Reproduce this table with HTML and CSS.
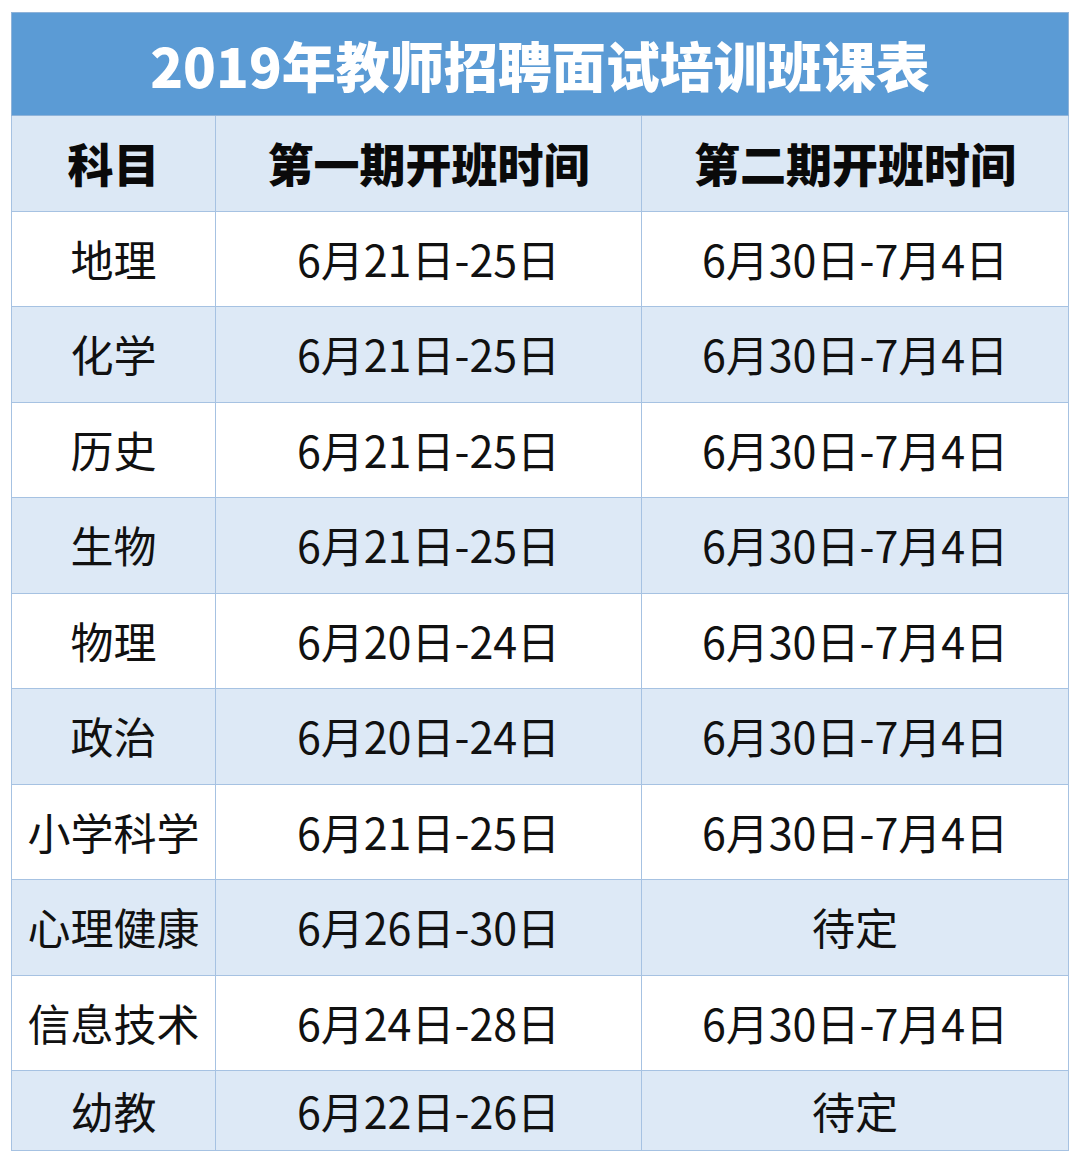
FILE: index.html
```html
<!DOCTYPE html>
<html lang="zh-CN">
<head>
<meta charset="utf-8">
<link rel="stylesheet" href="styles.css">
</head>
<body>
<table class="schedule">
  <colgroup>
    <col class="c-subject">
    <col class="c-first">
    <col class="c-second">
  </colgroup>
  <thead>
    <tr class="title-row"><th colspan="3">2019年教师招聘面试培训班课表</th></tr>
    <tr class="head-row"><th>科目</th><th>第一期开班时间</th><th>第二期开班时间</th></tr>
  </thead>
  <tbody>
    <tr><td>地理</td><td>6月21日-25日</td><td>6月30日-7月4日</td></tr>
    <tr class="alt"><td>化学</td><td>6月21日-25日</td><td>6月30日-7月4日</td></tr>
    <tr><td>历史</td><td>6月21日-25日</td><td>6月30日-7月4日</td></tr>
    <tr class="alt"><td>生物</td><td>6月21日-25日</td><td>6月30日-7月4日</td></tr>
    <tr><td>物理</td><td>6月20日-24日</td><td>6月30日-7月4日</td></tr>
    <tr class="alt"><td>政治</td><td>6月20日-24日</td><td>6月30日-7月4日</td></tr>
    <tr><td>小学科学</td><td>6月21日-25日</td><td>6月30日-7月4日</td></tr>
    <tr class="alt"><td>心理健康</td><td>6月26日-30日</td><td>待定</td></tr>
    <tr><td>信息技术</td><td>6月24日-28日</td><td>6月30日-7月4日</td></tr>
    <tr class="alt last"><td>幼教</td><td>6月22日-26日</td><td>待定</td></tr>
  </tbody>
</table>
</body>
</html>
```
FILE: styles.css
```css
html, body {
  margin: 0;
  padding: 0;
  background: #ffffff;
}
body {
  padding: 12px 0 0 11px;
  font-family: "Noto Sans CJK SC", "Noto Sans", sans-serif;
  color: #111111;
}
.schedule {
  border-collapse: collapse;
  table-layout: fixed;
  width: 1057px;
}
.c-subject { width: 204px; }
.c-first { width: 426px; }
.c-second { width: 427px; }
.schedule th, .schedule td {
  border: 1px solid #a6c2e2;
  text-align: center;
  vertical-align: middle;
  padding: 0;
  white-space: nowrap;
}
.title-row th {
  background: #5b9bd5;
  color: #ffffff;
  font-size: 54px;
  font-weight: 900;
  height: 102px;
  border-color: #8fb3d9;
}
.head-row th {
  background: #dce8f5;
  color: #0a0a0a;
  font-size: 46px;
  font-weight: 900;
  height: 92.5px;
  padding-bottom: 2px;
}
.schedule td {
  font-size: 43px;
  font-weight: 400;
  height: 92.5px;
  padding-bottom: 2px;
  background: #ffffff;
}
.schedule tr.alt td {
  background: #dde9f6;
}
.schedule tr.last td {
  height: 77px;
}
```
